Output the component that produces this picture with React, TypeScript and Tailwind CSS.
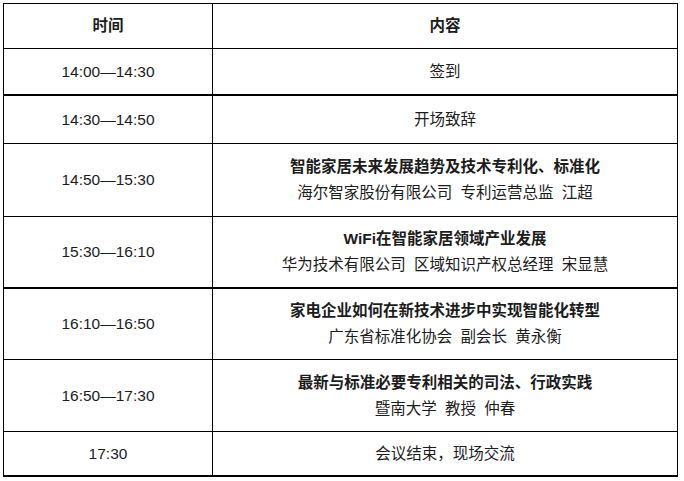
const rows: {
  time: string;
  title: string;
  sub?: string;
  bold?: boolean;
  h: string;
  top: string;
}[] = [
  { time: '14:00—14:30', title: '签到', h: 'h-[46px]', top: 'border-t' },
  { time: '14:30—14:50', title: '开场致辞', h: 'h-[49px]', top: 'border-t-2' },
  {
    time: '14:50—15:30',
    title: '智能家居未来发展趋势及技术专利化、标准化',
    sub: '海尔智家股份有限公司 专利运营总监 江超',
    bold: true,
    h: 'h-[73px]',
    top: 'border-t',
  },
  {
    time: '15:30—16:10',
    title: 'WiFi在智能家居领域产业发展',
    sub: '华为技术有限公司 区域知识产权总经理 宋显慧',
    bold: true,
    h: 'h-[71px]',
    top: 'border-t',
  },
  {
    time: '16:10—16:50',
    title: '家电企业如何在新技术进步中实现智能化转型',
    sub: '广东省标准化协会 副会长 黄永衡',
    bold: true,
    h: 'h-[72px]',
    top: 'border-t-2',
  },
  {
    time: '16:50—17:30',
    title: '最新与标准必要专利相关的司法、行政实践',
    sub: '暨南大学 教授 仲春',
    bold: true,
    h: 'h-[72px]',
    top: 'border-t',
  },
  { time: '17:30', title: '会议结束，现场交流', h: 'h-[44px]', top: 'border-t' },
];

export default function App() {
  return (
    <div
      className="w-[684px] h-[481px] bg-white pt-[3px] pl-[3px] text-[15.5px] text-[#1c1c1c]"
      style={{ fontFamily: '"Liberation Sans", "Noto Sans CJK SC", sans-serif' }}
    >
      <div className="w-[675px] border-x border-black border-b-2">
        {/* Header */}
        <div className="grid grid-cols-[209px_1fr] h-[45px] border-t border-black font-bold">
          <div className="flex items-center justify-center border-r border-black">时间</div>
          <div className="flex items-center justify-center">内容</div>
        </div>

        {rows.map((r) => (
          <div
            key={r.time}
            className={`grid grid-cols-[209px_1fr] border-black ${r.h} ${r.top}`}
          >
            <div className="flex items-center justify-center border-r border-black">{r.time}</div>
            <div className="flex flex-col items-center justify-center leading-[26px]">
              <div className={r.bold ? 'font-bold' : ''}>{r.title}</div>
              {r.sub && <div className="[word-spacing:4px]">{r.sub}</div>}
            </div>
          </div>
        ))}
      </div>
    </div>
  );
}
